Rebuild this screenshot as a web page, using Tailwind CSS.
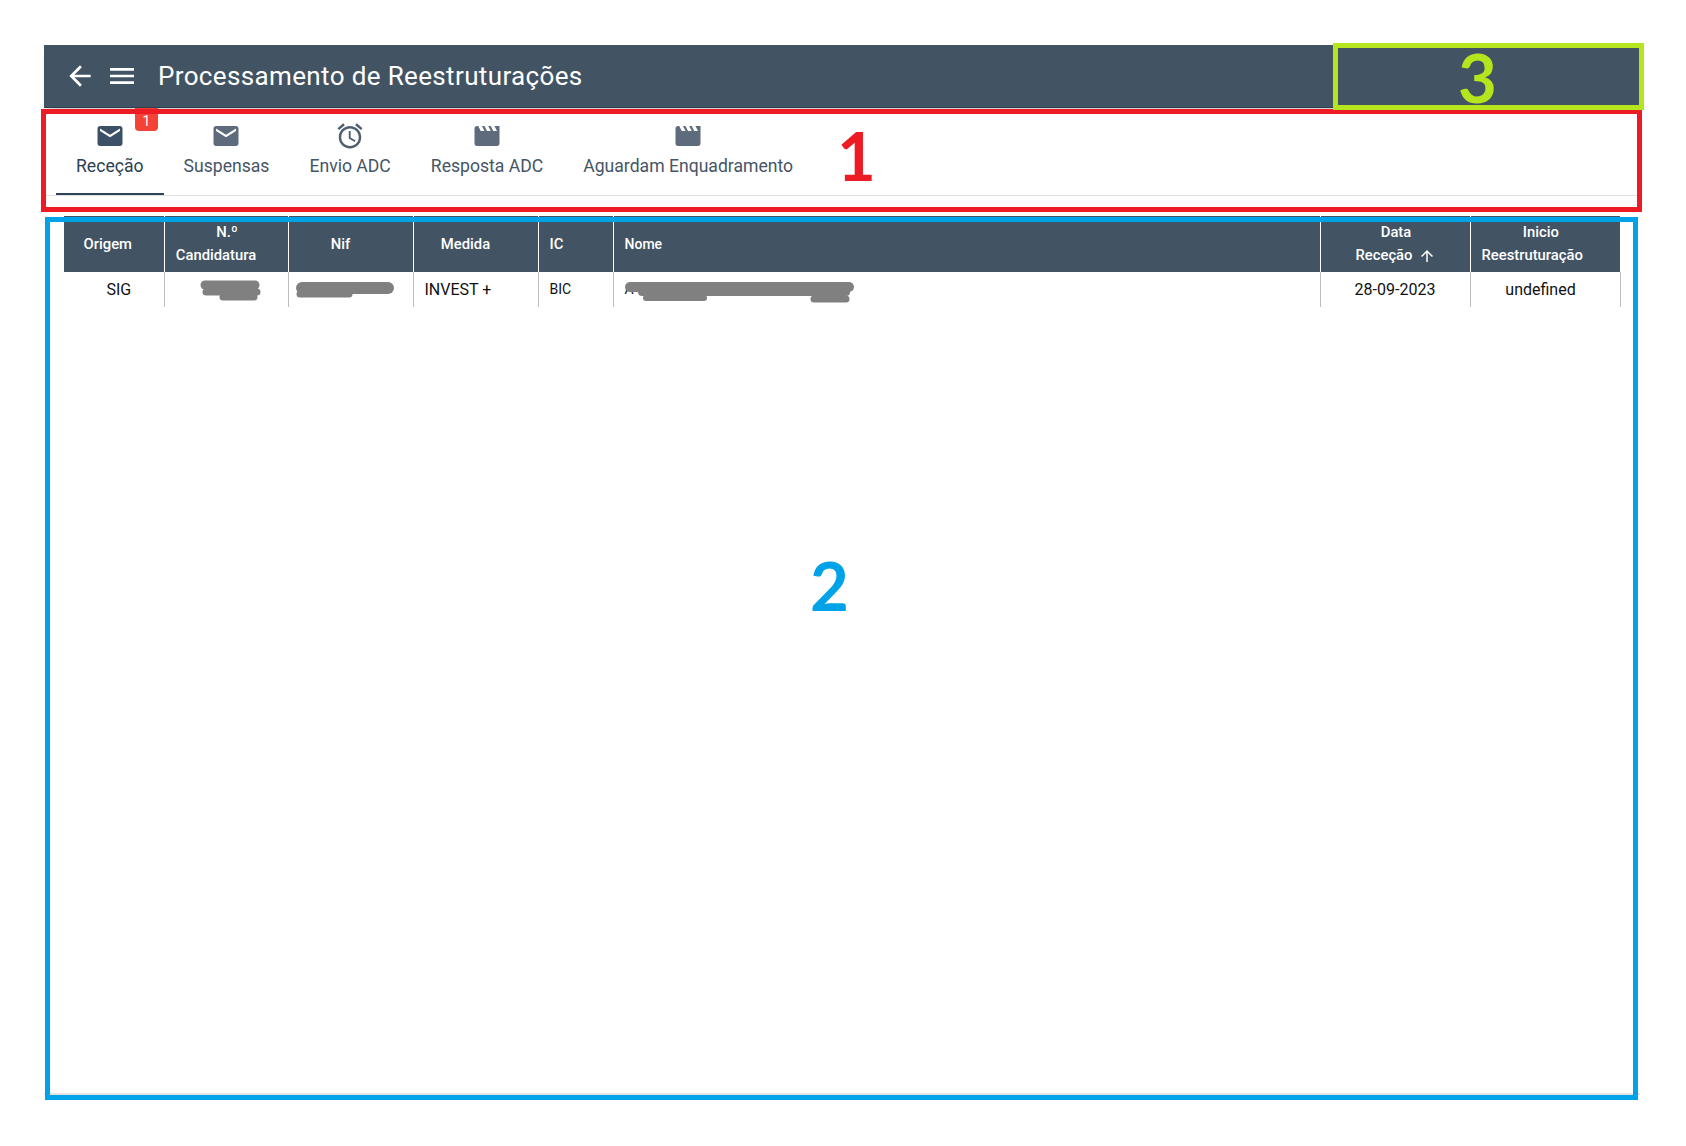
<!DOCTYPE html>
<html lang="pt-PT">
<head>
    <meta charset="UTF-8">
    <meta name="viewport" content="width=device-width, initial-scale=1.0">
    <title>Processamento de Reestruturações</title>
    <script src="https://cdn.jsdelivr.net/npm/@tailwindcss/browser@4"></script>
</head>
<body class="bg-white font-[Roboto,sans-serif]">
    <div class="relative w-[1686px] h-[1146px] overflow-hidden pt-[45px] pl-[44px]">
        <div class="w-[1596px]">
            <!-- Header -->
            <header class="h-[63px] bg-[#425364] border-b border-[#2f3e4e] shadow-[0_6px_6px_-3px_rgba(0,0,0,0.2)] flex items-center pl-[20px] text-white">
                <svg class="w-[32px] h-[32px]" viewBox="0 0 24 24" fill="currentColor"><path d="M20 11H7.83l5.59-5.59L12 4l-8 8 8 8 1.41-1.41L7.83 13H20v-2z"/></svg>
                <svg class="w-[32px] h-[32px] ml-[10px]" viewBox="0 0 24 24" fill="currentColor"><path d="M3 18h18v-2H3v2zm0-5h18v-2H3v2zm0-7v2h18V6H3z"/></svg>
                <h1 class="ml-[20px] text-[26px] leading-none tracking-[0.36px]">Processamento de Reestruturações</h1>
            </header>

            <!-- Tabs -->
            <nav class="h-[88px] border-b border-[#e0e0e0] flex pl-[12px] text-[17.6px] leading-[24px] text-[#455566]">
                <a class="relative h-[87px] px-[20px] pt-[13px] flex flex-col items-center border-b-2 border-[#2c4359] text-[#2b3f53]">
                    <svg class="w-[30px] h-[30px] text-[#3d5166]" viewBox="0 0 24 24" fill="currentColor"><path d="M20 4H4c-1.1 0-1.99.9-1.99 2L2 18c0 1.1.9 2 2 2h16c1.1 0 2-.9 2-2V6c0-1.1-.9-2-2-2zm0 4l-8 5-8-5V6l8 5 8-5v2z"/></svg>
                    <span class="mt-[3px]">Receção</span>
                    <span class="absolute left-[79px] top-0 w-[23px] h-[23px] bg-[#f44336] rounded-b-[4px] text-white text-[14px] leading-[16px] pt-[5px] text-center">1</span>
                </a>
                <a class="h-[87px] px-[20px] pt-[13px] flex flex-col items-center">
                    <svg class="w-[30px] h-[30px] text-[#5d6b7c]" viewBox="0 0 24 24" fill="currentColor"><path d="M20 4H4c-1.1 0-1.99.9-1.99 2L2 18c0 1.1.9 2 2 2h16c1.1 0 2-.9 2-2V6c0-1.1-.9-2-2-2zm0 4l-8 5-8-5V6l8 5 8-5v2z"/></svg>
                    <span class="mt-[3px]">Suspensas</span>
                </a>
                <a class="h-[87px] px-[20px] pt-[13px] flex flex-col items-center">
                    <svg class="w-[30px] h-[30px] text-[#4f5f70]" viewBox="0 0 24 24" fill="currentColor"><path d="M22 5.72l-4.6-3.86-1.29 1.53 4.6 3.86L22 5.72zM7.88 3.39L6.6 1.86 2 5.71l1.29 1.53 4.59-3.85zM12.5 8H11v6l4.75 2.85.75-1.23-4-2.37V8zM12 4c-4.97 0-9 4.03-9 9s4.02 9 9 9c4.97 0 9-4.03 9-9s-4.03-9-9-9zm0 16c-3.87 0-7-3.13-7-7s3.13-7 7-7 7 3.13 7 7-3.13 7-7 7z"/></svg>
                    <span class="mt-[3px]">Envio ADC</span>
                </a>
                <a class="h-[87px] px-[20px] pt-[13px] flex flex-col items-center">
                    <svg class="w-[30px] h-[30px] text-[#5d6b7c]" viewBox="0 0 24 24" fill="currentColor"><path d="M18 4l2 4h-3l-2-4h-2l2 4h-3l-2-4H8l2 4H7L5 4H4c-1.1 0-1.99.9-1.99 2L2 18c0 1.1.9 2 2 2h16c1.1 0 2-.9 2-2V4h-4z"/></svg>
                    <span class="mt-[3px]">Resposta ADC</span>
                </a>
                <a class="h-[87px] px-[20px] pt-[13px] flex flex-col items-center">
                    <svg class="w-[30px] h-[30px] text-[#5d6b7c]" viewBox="0 0 24 24" fill="currentColor"><path d="M18 4l2 4h-3l-2-4h-2l2 4h-3l-2-4H8l2 4H7L5 4H4c-1.1 0-1.99.9-1.99 2L2 18c0 1.1.9 2 2 2h16c1.1 0 2-.9 2-2V4h-4z"/></svg>
                    <span class="mt-[3px]">Aguardam Enquadramento</span>
                </a>
            </nav>

            <!-- Table -->
            <div class="mt-[20px] pl-[20px] h-[879px] border-b-2 border-[#e4e4e4]">
                <table class="table-fixed w-[1556px] border-collapse text-[#111]">
                    <colgroup>
                        <col class="w-[100px]"><col class="w-[124px]"><col class="w-[125px]"><col class="w-[125px]"><col class="w-[75px]"><col class="w-[707px]"><col class="w-[150px]"><col class="w-[150px]">
                    </colgroup>
                    <thead class="bg-[#425364] text-white text-[14.8px] font-medium leading-[23px]">
                        <tr class="h-[56px]">
                            <th class="font-medium border-r border-white pr-[12px]">Origem</th>
                            <th class="font-medium border-r border-white"><span class="block pl-[2px]">N.º</span><span class="inline-flex items-center">Candidatura<span class="w-[20px]"></span></span></th>
                            <th class="font-medium border-r border-white pr-[20px]">Nif</th>
                            <th class="font-medium border-r border-white pr-[20px]">Medida</th>
                            <th class="font-medium border-r border-white text-left pl-[11px]">IC</th>
                            <th class="font-medium border-r border-white text-left pl-[11px] text-[14px]">Nome</th>
                            <th class="font-medium border-r border-white"><span class="block pl-[2px]">Data</span>
                                <span class="inline-flex items-center pl-[2px]">Receção
                                    <svg class="w-[18px] h-[18px] ml-[6px]" viewBox="0 0 24 24" fill="currentColor"><path d="M4 12l1.41 1.41L11 7.83V20h2V7.83l5.58 5.59L20 12l-8-8-8 8z"/></svg>
                                </span>
                            </th>
                            <th class="font-medium text-left pl-[11px]"><span class="block text-center pr-[20px]">Inicio</span>Reestruturação</th>
                        </tr>
                    </thead>
                    <tbody class="text-[16px]">
                        <tr class="h-[35px]">
                            <td class="border-r border-[#bdbdbd] text-center pl-[10px]">SIG</td>
                            <td class="relative border-r border-[#bdbdbd]">
                                <svg class="absolute left-0 top-0 w-[123px] h-[35px]" viewBox="0 0 123 35" fill="none" stroke="#808080" stroke-linecap="round">
                                    <path d="M40 13 H90" stroke-width="9"/>
                                    <path d="M41 20 H92" stroke-width="7"/>
                                    <path d="M58 25 H89" stroke-width="7"/>
                                </svg>
                            </td>
                            <td class="relative border-r border-[#bdbdbd]">
                                <svg class="absolute left-0 top-0 w-[124px] h-[35px]" viewBox="0 0 124 35" fill="none" stroke="#808080" stroke-linecap="round">
                                    <path d="M13 16 H99" stroke-width="12"/>
                                    <path d="M11 22 H60" stroke-width="7"/>
                                </svg>
                            </td>
                            <td class="border-r border-[#bdbdbd] pl-[11px]">INVEST +</td>
                            <td class="border-r border-[#bdbdbd] pl-[11px] text-[14px]">BIC</td>
                            <td class="relative border-r border-[#bdbdbd] pl-[11px] text-[14px]">A
                                <svg class="absolute left-0 top-0 w-[300px] h-[35px]" viewBox="0 0 300 35" fill="none" stroke="#808080" stroke-linecap="round">
                                    <path d="M16 15 H235" stroke-width="10"/>
                                    <path d="M28 20 H232" stroke-width="8"/>
                                    <path d="M32 26 H90" stroke-width="6"/>
                                    <path d="M200 27 H232" stroke-width="7"/>
                                </svg>
                            </td>
                            <td class="border-r border-[#bdbdbd] text-center">28-09-2023</td>
                            <td class="border-r border-[#bdbdbd] text-center pr-[9px]">undefined</td>
                        </tr>
                    </tbody>
                </table>
            </div>
        </div>

        <!-- Annotation frames drawn over the screenshot -->
        <div class="absolute left-[41px] top-[109px] w-[1601px] h-[103px] border-[5px] border-[#ed1c24]"></div>
        <div class="absolute left-[45px] top-[217px] w-[1593px] h-[883px] border-[5px] border-[#00a2e8]"></div>
        <div class="absolute left-[1333px] top-[43px] w-[311px] h-[67px] border-[5px] border-[#b5e61d]"></div>
        <span class="absolute left-[837px] top-[110px] font-[Lato,sans-serif] font-bold text-[67px] leading-[90px] text-[#ed1c24]">1</span>
        <span class="absolute left-[810px] top-[540px] font-[Lato,sans-serif] font-bold text-[67px] leading-[90px] text-[#00a2e8]">2</span>
        <span class="absolute left-[1458px] top-[32px] font-[Lato,sans-serif] font-bold text-[67px] leading-[90px] text-[#b5e61d]">3</span>
    </div>
</body>
</html>
